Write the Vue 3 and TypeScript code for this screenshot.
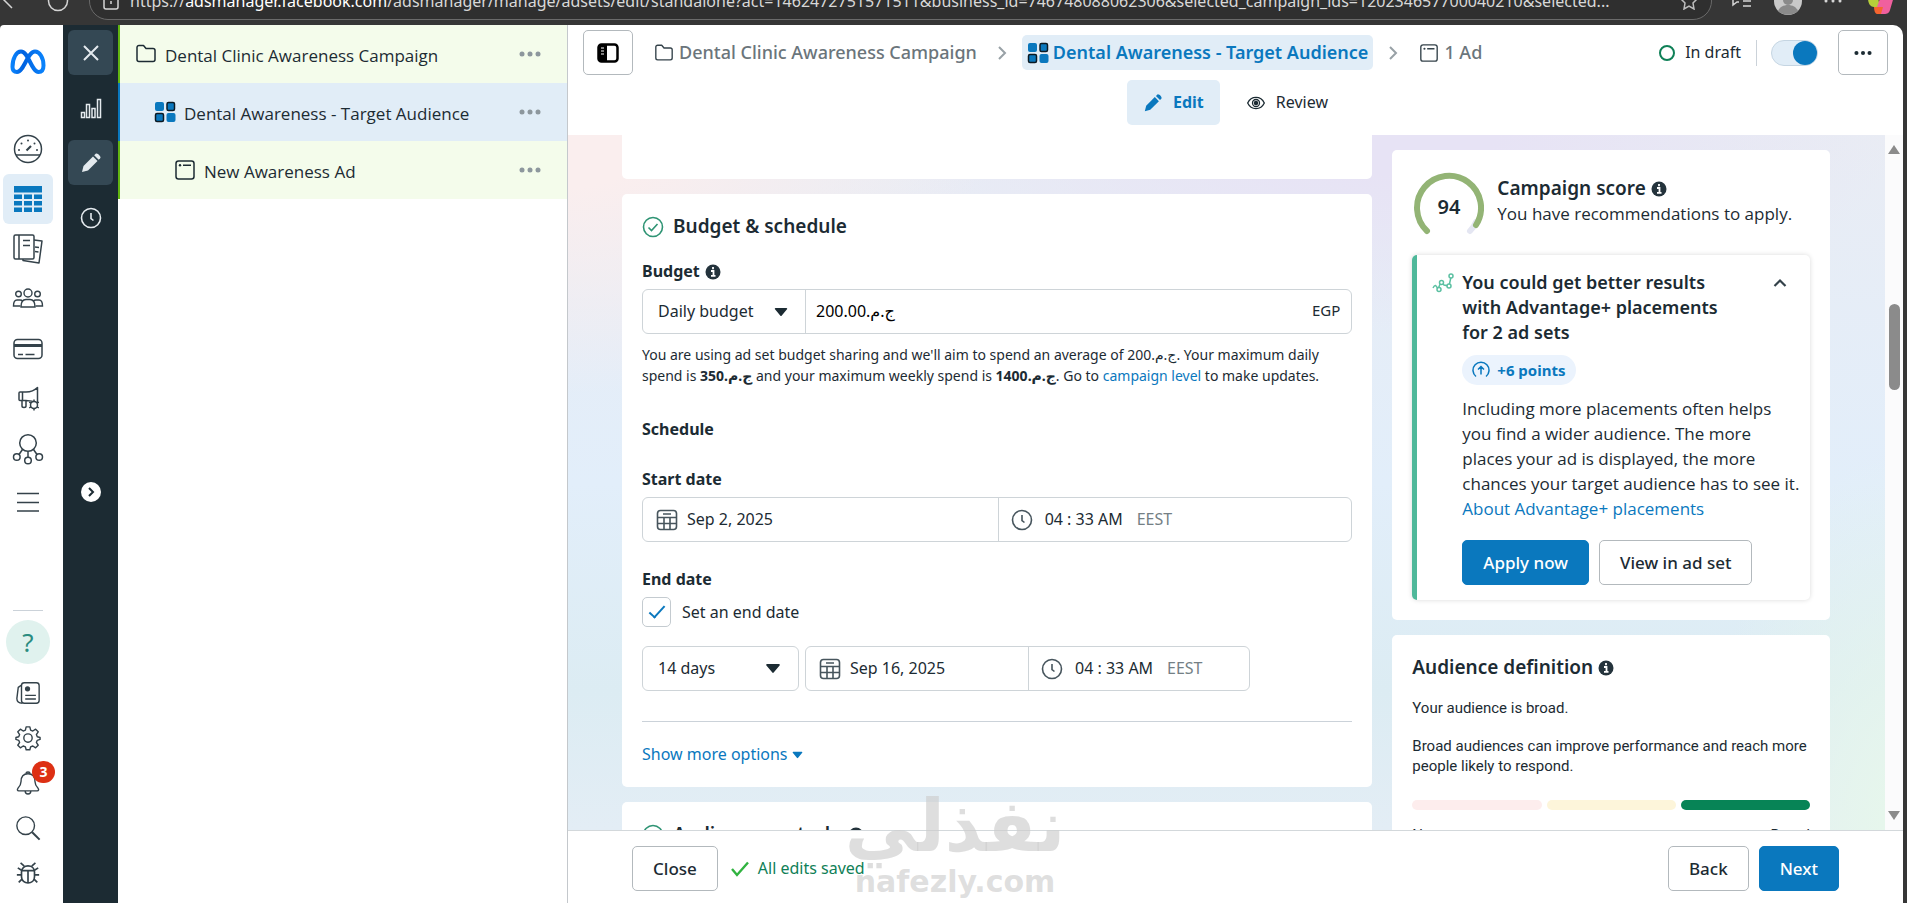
<script setup lang="ts">
import { ref } from 'vue'

interface TreeRow {
  icon: string
  label: string
  depth: number
  active: boolean
}

const treeRows: TreeRow[] = [
  { icon: 'folder', label: 'Dental Clinic Awareness Campaign', depth: 0, active: false },
  { icon: 'adset', label: 'Dental Awareness - Target Audience', depth: 1, active: true },
  { icon: 'ad', label: 'New Awareness Ad', depth: 2, active: false },
]

const mainNav = [
  { icon: 'gauge', label: 'Account overview' },
  { icon: 'table', label: 'Campaigns' },
  { icon: 'pages', label: 'Ads reporting' },
  { icon: 'people', label: 'Audiences' },
  { icon: 'card', label: 'Billing' },
  { icon: 'megaphone', label: 'Advertising settings' },
  { icon: 'nodes', label: 'Events manager' },
  { icon: 'menu', label: 'All tools' },
]

const utilityNav = [
  { icon: 'news', label: 'News', badge: 0 },
  { icon: 'gear', label: 'Settings', badge: 0 },
  { icon: 'bell', label: 'Notifications', badge: 3 },
  { icon: 'search', label: 'Search', badge: 0 },
  { icon: 'bug', label: 'Report a problem', badge: 0 },
]

const budgetType = ref('Daily budget')
const budgetAmount = ref('200.00\u2067ج.م.\u2069')
const startDate = ref('Sep 2, 2025')
const startTime = ref('04 : 33 AM')
const hasEndDate = ref(true)
const duration = ref('14 days')
const endDate = ref('Sep 16, 2025')
const endTime = ref('04 : 33 AM')
const adsetOn = ref(true)
</script>

<template>
  <svg class="sprite" width="0" height="0" aria-hidden="true">
    <defs>
      <linearGradient id="meta-grad" x1="0" y1="0" x2="1" y2="0">
        <stop offset="0" stop-color="#0a82fb" />
        <stop offset=".35" stop-color="#0062e0" />
        <stop offset="1" stop-color="#0a82fb" />
      </linearGradient>
    </defs>
    <symbol id="folder" viewBox="0 0 22 22">
      <path d="M2 4.500a2 2 0 0 1 2-2h4.500l2.500 3H18a2 2 0 0 1 2 2v9a2 2 0 0 1-2 2H4a2 2 0 0 1-2-2z" fill="none" stroke="currentColor" stroke-width="1.500" stroke-linejoin="round" />
    </symbol>
    <symbol id="adset" viewBox="0 0 22 22">
      <rect x="1" y="1" width="9" height="9" rx="2" fill="#0a78be" />
      <rect x="13" y="1.500" width="7.500" height="8" rx="1.500" fill="#0a78be" stroke="#0b1a24" stroke-width="1.500" />
      <rect x="1.500" y="12.500" width="8" height="8" rx="1.500" fill="#0a78be" stroke="#0b1a24" stroke-width="1.500" />
      <rect x="12.500" y="12" width="9" height="9" rx="2" fill="#0a78be" />
    </symbol>
    <symbol id="ad" viewBox="0 0 22 22">
      <rect x="2" y="2" width="18" height="18" rx="2.500" fill="none" stroke="currentColor" stroke-width="1.500" />
      <circle cx="6" cy="6.300" r="1.200" fill="currentColor" />
      <path d="M9 6.300h8" stroke="currentColor" stroke-width="1.500" />
    </symbol>
    <symbol id="gauge" viewBox="0 0 32 32">
      <g fill="none" stroke="currentColor" stroke-width="1.500">
        <circle cx="16" cy="16" r="13.500" />
        <path d="M4 22h24" />
        <path d="M14.500 17.500l4.500-4.500" stroke-width="2.200" />
      </g>
      <g fill="currentColor"><circle cx="7" cy="17" r="1" /><circle cx="9.500" cy="10.500" r="1" /><circle cx="16" cy="7.500" r="1" /><circle cx="22.500" cy="10.500" r="1" /><circle cx="25" cy="17" r="1" /></g>
    </symbol>
    <symbol id="table" viewBox="0 0 32 32">
      <g fill="#0a78be">
        <rect x="2" y="3" width="28" height="6.500" />
        <rect x="2" y="11.500" width="8" height="4.500" /><rect x="12" y="11.500" width="8" height="4.500" /><rect x="22" y="11.500" width="8" height="4.500" />
        <rect x="2" y="18" width="8" height="4.500" /><rect x="12" y="18" width="8" height="4.500" /><rect x="22" y="18" width="8" height="4.500" />
        <rect x="2" y="24.500" width="8" height="4.500" /><rect x="12" y="24.500" width="8" height="4.500" /><rect x="22" y="24.500" width="8" height="4.500" />
      </g>
    </symbol>
    <symbol id="pages" viewBox="0 0 32 32">
      <g fill="none" stroke="currentColor" stroke-width="1.500" stroke-linejoin="round">
        <rect x="2" y="2" width="20" height="24" rx="1.500" />
        <path d="M7 2v24M11 7.500h7M11 12.500h7" />
        <path d="M22 7l8 1-3 22-16-2.500V26M23 14l4 .600M23 18.500l3.500.500" />
      </g>
    </symbol>
    <symbol id="people" viewBox="0 0 32 32">
      <g fill="none" stroke="currentColor" stroke-width="1.400">
        <circle cx="16" cy="10" r="4" /><circle cx="6.500" cy="11" r="2.800" /><circle cx="25.500" cy="11" r="2.800" />
        <path d="M9 24c0-5 2-7.500 5-7.500h4c3 0 5 2.500 5 7.500z" />
        <path d="M8.500 23H1.500c0-4 1-6 3.500-6h3c1 0 2 .300 2.500 1M23.500 23h7c0-4-1-6-3.500-6h-3c-1 0-2 .300-2.500 1" />
      </g>
    </symbol>
    <symbol id="card" viewBox="0 0 32 32">
      <rect x="2" y="6.500" width="28" height="19" rx="3.500" fill="none" stroke="currentColor" stroke-width="1.500" />
      <path d="M2 12.500h28" stroke="currentColor" stroke-width="3" />
      <path d="M6 21.500h5M13.500 21.500h9" stroke="currentColor" stroke-width="1.300" />
    </symbol>
    <symbol id="megaphone" viewBox="0 0 32 32">
      <g fill="none" stroke="currentColor" stroke-width="1.500" stroke-linejoin="round">
        <path d="M7 10v6.500a1 1 0 0 0 1 1h6c5 0 8 1 11.500 2.500V4.500C22 8 19 9 14 9H8a1 1 0 0 0-1 1zM10.500 9v8.500M10 17.500v5.500c0 2 4 2 4 0v-5" />
      </g>
      <g stroke="currentColor" stroke-width="1.500"><circle cx="22" cy="22" r="3.500" fill="#fff" /><path d="M22 16.500v2M22 25.500v2M17.200 19.200l1.800 1M25 23.800l1.800 1M17.200 24.800l1.800-1M25 20.200l1.800-1" /></g>
    </symbol>
    <symbol id="nodes" viewBox="0 0 32 32">
      <g fill="none" stroke="currentColor" stroke-width="1.500">
        <circle cx="16" cy="10" r="8.300" /><circle cx="4.800" cy="24" r="3.300" /><circle cx="27.200" cy="24" r="3.300" /><circle cx="16" cy="27.500" r="3.300" />
        <path d="M16 18.500v5.500M10.500 16.500l-3.500 5M21.500 16.500l3.500 5" />
      </g>
    </symbol>
    <symbol id="menu" viewBox="0 0 32 32">
      <path d="M5 10.500h22M5 19.500h22M5 28h22" stroke="currentColor" stroke-width="1.500" />
    </symbol>
    <symbol id="news" viewBox="0 0 28 28">
      <g fill="none" stroke="currentColor" stroke-width="1.500" stroke-linejoin="round">
        <rect x="7" y="3" width="19" height="22" rx="3" />
        <path d="M7 5.500L3.500 8 2 20c0 3 2 5 6 5" /><path d="M11 16.500h11.500M11 20.500h11.500" />
      </g>
      <circle cx="13.500" cy="9.500" r="2.800" fill="currentColor" />
    </symbol>
    <symbol id="gear" viewBox="0 0 28 28">
      <g fill="none" stroke="currentColor" stroke-width="1.500" stroke-linejoin="round">
        <circle cx="14" cy="14" r="4.500" />
        <path d="M12 2h4l.800 3.500 2.400 1 3-2 2.800 2.800-2 3 1 2.400L27 13.500v2l-3 1-1 2.300 2 3-2.800 2.800-3-2-2.400 1-.800 3h-4l-.800-3-2.400-1-3 2L3 21.800l2-3-1-2.300-3-1v-2l3-.800 1-2.400-2-3 2.800-2.800 3 2 2.400-1z" />
      </g>
    </symbol>
    <symbol id="bell" viewBox="0 0 28 28">
      <g fill="none" stroke="currentColor" stroke-width="1.500" stroke-linejoin="round">
        <path d="M14 4c5 0 7.500 3.500 7.500 8.500 0 4 1.500 5.500 3.500 7.500.800 1 .500 2.500-1 2.500H4c-1.500 0-1.800-1.500-1-2.500 2-2 3.500-3.500 3.500-7.500C6.500 7.500 9 4 14 4z" />
        <path d="M11 22.500c0 4.500 6 4.500 6 0M12 4c0-2.500 4-2.500 4 0" />
      </g>
    </symbol>
    <symbol id="search" viewBox="0 0 28 28">
      <circle cx="11.500" cy="11.500" r="9.500" fill="none" stroke="currentColor" stroke-width="1.500" />
      <path d="M18.500 18.500l8 8" stroke="currentColor" stroke-width="2.200" />
    </symbol>
    <symbol id="bug" viewBox="0 0 28 28">
      <g fill="none" stroke="currentColor" stroke-width="1.800">
        <path d="M7 13c0-9 14-9 14 0v5c0 9-14 9-14 0zM7 11.500h14M14 11.500V25" />
        <path d="M10 6.500L6 3M18 6.500L22 3M7 11L3 8.500M21 11l4-2.500M7 16H2M21 16h5M7.500 20.500L4 24M20.500 20.500L24 24" />
      </g>
    </symbol>
    <symbol id="pencil" viewBox="0 0 22 22">
      <path d="M2 20l1.500-6L13 4.500l4.500 4.500L8 18.500z" fill="currentColor" />
      <path d="M14.200 3.300l1.500-1.500c1.500-1.500 6 3 4.500 4.500l-1.500 1.500z" fill="currentColor" />
    </symbol>
    <symbol id="clock" viewBox="0 0 22 22">
      <g fill="none" stroke="currentColor" stroke-width="1.600"><circle cx="11" cy="11" r="9.500" /><path d="M11 6v5.500l2.500 2" /></g>
    </symbol>
    <symbol id="calendar" viewBox="0 0 22 22">
      <g fill="none" stroke="currentColor" stroke-width="1.600">
        <rect x="1.500" y="1.500" width="19" height="19" rx="3" /><path d="M1.500 8.500h19M1.500 14.500h19M8 8.500v12M14 8.500v12M7 5h8" />
      </g>
    </symbol>
    <symbol id="chevron" viewBox="0 0 12 16">
      <path d="M3 2l6 6-6 6" fill="none" stroke="currentColor" stroke-width="2" />
    </symbol>
    <symbol id="check-ring" viewBox="0 0 22 22">
      <g fill="none" stroke="#2f9474" stroke-width="1.600"><circle cx="11" cy="11" r="9.500" /><path d="M6.500 11.500l3 3 6-6.500" /></g>
    </symbol>
    <symbol id="info" viewBox="0 0 16 16">
      <circle cx="8" cy="8" r="7.500" fill="#24333c" />
      <path d="M8 3v2.200M6 7h2.500v4.500M6 11.800h4.500" stroke="#fff" stroke-width="1.800" fill="none" />
    </symbol>
    <symbol id="caret" viewBox="0 0 14 10">
      <path d="M1.500 1h11a.7.700 0 0 1 .500 1.200L7.800 8.500a1 1 0 0 1-1.600 0L1 2.200A.7.700 0 0 1 1.500 1z" fill="currentColor" />
    </symbol>
    <symbol id="dots" viewBox="0 0 22 6">
      <g fill="currentColor"><circle cx="3" cy="3" r="2.500" /><circle cx="11" cy="3" r="2.500" /><circle cx="19" cy="3" r="2.500" /></g>
    </symbol>
  </svg>

  <div class="window">
    <header class="browser">
      <svg class="nav-icons" width="89" height="40" viewBox="0 0 89 40" fill="none" stroke="#d5d5d5" stroke-width="1.500">
        <path d="M12 27L2 17" /><circle cx="58" cy="20" r="9.500" />
      </svg>
      <div class="omnibox">
        <svg width="16" height="18" viewBox="0 0 16 18" fill="none" stroke="#d5d5d5" stroke-width="1.500">
          <rect x="1" y="5" width="14" height="12" rx="2" /><path d="M4 5V1h8v4M8 9v3" />
        </svg>
        <span class="url">https://<b>adsmanager.facebook.com</b>/adsmanager/manage/adsets/edit/standalone?act=1462472751571511&amp;business_id=746748088062306&amp;selected_campaign_ids=120234657700040210&amp;selected...</span>
        <svg width="18" height="18" viewBox="0 0 18 18" fill="none" stroke="#bdbdbd" stroke-width="1.500">
          <path d="M9 1l2.500 5.300 5.500.700-4 4 1 6L9 14l-5 3 1-6-4-4 5.500-.700z" />
        </svg>
      </div>
      <svg class="tools" width="195" height="40" viewBox="0 0 195 40" fill="none">
        <path d="M21 17v7l4-3h2M24 15h15M31 20h8M31 25h8" stroke="#d5d5d5" stroke-width="1.500" />
        <circle cx="76" cy="20" r="14" fill="#c9c9c9" /><circle cx="76" cy="19" r="5" fill="#8a8a8a" /><path d="M66 30c3-8 17-8 20 0-5 5-15 5-20 0z" fill="#8a8a8a" />
        <g fill="#d5d5d5"><circle cx="114" cy="20" r="1.500" /><circle cx="121" cy="20" r="1.500" /><circle cx="128" cy="20" r="1.500" /></g>
        <g>
          <path d="M156 17l9-5 3 14h-6c-4 0-6-4-6-9z" fill="#b6cf3a" /><path d="M165 26l5-14h13l-5 17c-1 4-4 4-7 4h-6c3-1 4-4 5-7z" fill="#f0609e" /><path d="M162 26h9l-2 7h-4c-2 0-3-4-3-7z" fill="#f5652f" />
        </g>
      </svg>
    </header>

    <div class="app">
      <nav class="rail" aria-label="Tools">
        <svg class="meta" width="36" height="26" viewBox="0 0 36 26" aria-label="Meta">
          <path d="M2.500 18C2.500 9 6.500 2.500 11 2.500c7.500 0 10.500 20.500 17.500 20.500 3.500 0 5-2.500 5-6.500 0-8-4-14-8.500-14C17.500 2.500 14 23 7 23c-3 0-4.500-2-4.500-5z" fill="none" stroke="url(#meta-grad)" stroke-width="4" />
        </svg>
        <div class="rail-main">
          <button v-for="item in mainNav" :key="item.icon" type="button" class="rail-btn" :class="{ current: item.icon === 'table' }" :aria-label="item.label">
            <svg width="32" height="32"><use :href="'#' + item.icon" /></svg>
          </button>
        </div>
        <div class="rail-foot">
          <button type="button" class="help" aria-label="Help">?</button>
          <button v-for="item in utilityNav" :key="item.icon" type="button" class="util-btn" :aria-label="item.label">
            <svg width="26" height="26"><use :href="'#' + item.icon" /></svg>
            <span v-if="item.badge" class="badge">{{ item.badge }}</span>
          </button>
        </div>
      </nav>

      <nav class="dark-rail" aria-label="Editor views">
        <button type="button" class="dark-btn lit" aria-label="Close editor">
          <svg width="20" height="20" viewBox="0 0 20 20"><path d="M3 3l14 14M17 3L3 17" stroke="currentColor" stroke-width="2" /></svg>
        </button>
        <button type="button" class="dark-btn" aria-label="Charts">
          <svg width="22" height="22" viewBox="0 0 22 22" fill="none" stroke="currentColor" stroke-width="1.500"><rect x="1.500" y="15.500" width="3" height="5" /><rect x="6.500" y="7.500" width="3" height="13" /><rect x="12" y="11.500" width="3" height="9" /><rect x="17.500" y="2.500" width="3" height="18" /></svg>
        </button>
        <button type="button" class="dark-btn lit" aria-label="Edit">
          <svg width="22" height="22"><use href="#pencil" /></svg>
        </button>
        <button type="button" class="dark-btn" aria-label="History">
          <svg width="22" height="22"><use href="#clock" /></svg>
        </button>
        <button type="button" class="expand" aria-label="Expand panel">
          <svg width="12" height="12" viewBox="0 0 12 12"><path d="M4 2l4 4-4 4" fill="none" stroke="#1c2b33" stroke-width="2" /></svg>
        </button>
      </nav>

      <aside class="tree">
        <div v-for="row in treeRows" :key="row.label" class="tree-row" :class="['depth-' + row.depth, { active: row.active }]">
          <svg width="22" height="22"><use :href="'#' + row.icon" /></svg>
          <span class="tree-label">{{ row.label }}</span>
          <button type="button" class="more" aria-label="More actions"><svg width="22" height="6"><use href="#dots" /></svg></button>
        </div>
      </aside>

      <section class="editor">
        <div class="head">
          <div class="crumb-row">
            <button type="button" class="box-btn" aria-label="Toggle side panel">
              <svg width="22" height="20" viewBox="0 0 22 20"><rect x="1.500" y="1.500" width="19" height="17" rx="3" fill="#fff" stroke="#000" stroke-width="2.500" /><path d="M2 2h8v16H2z" /><path d="M4 5h3M4 8h3M4 11h3" stroke="#fff" stroke-width="1.200" /></svg>
            </button>
            <a href="#" class="crumb"><svg width="22" height="20"><use href="#folder" /></svg>Dental Clinic Awareness Campaign</a>
            <svg class="sep" width="12" height="16"><use href="#chevron" /></svg>
            <a href="#" class="crumb here"><svg width="22" height="22"><use href="#adset" /></svg>Dental Awareness - Target Audience</a>
            <svg class="sep" width="12" height="16"><use href="#chevron" /></svg>
            <a href="#" class="crumb"><svg width="22" height="20"><use href="#ad" /></svg>1 Ad</a>
            <div class="status">
              <span class="ring"></span><span>In draft</span>
              <label class="switch"><input v-model="adsetOn" type="checkbox" role="switch" aria-label="Ad set on" /></label>
              <button type="button" class="box-btn" aria-label="More options"><svg width="18" height="6"><use href="#dots" /></svg></button>
            </div>
          </div>
          <div class="tabs">
            <button type="button" class="tab on"><svg width="20" height="20"><use href="#pencil" /></svg>Edit</button>
            <button type="button" class="tab">
              <svg width="20" height="14" viewBox="0 0 22 16" fill="none" stroke="currentColor" stroke-width="1.500"><path d="M1.500 8c4-8.500 15-8.500 19 0-4 8.500-15 8.500-19 0z" /><circle cx="11" cy="8" r="4" /><circle cx="11" cy="8" r="1.800" fill="currentColor" /></svg>Review
            </button>
          </div>
        </div>

        <div class="scroll-area">
          <div class="columns">
            <div class="col">
              <div class="card stub"></div>
              <div class="card form">
                <h2><svg width="22" height="22"><use href="#check-ring" /></svg>Budget &amp; schedule</h2>
                <div class="field">
                  <label for="amount" class="label">Budget <svg width="16" height="16"><use href="#info" /></svg></label>
                  <div class="combo">
                    <span class="select budget-type">
                      <select v-model="budgetType" aria-label="Budget type"><option>Daily budget</option><option>Lifetime budget</option></select>
                      <svg width="14" height="10"><use href="#caret" /></svg>
                    </span>
                    <input id="amount" v-model="budgetAmount" class="amount" type="text" />
                    <span class="currency">EGP</span>
                  </div>
                  <p class="hint">You are using ad set budget sharing and we'll aim to spend an average of 200.<bdi dir="rtl">ج.م</bdi>. Your maximum daily spend is <b>350.<bdi dir="rtl">ج.م</bdi></b> and your maximum weekly spend is <b>1400.<bdi dir="rtl">ج.م</bdi></b>. Go to <a href="#">campaign level</a> to make updates.</p>
                </div>
                <h3 class="label schedule">Schedule</h3>
                <div class="field start">
                  <label for="start" class="label">Start date</label>
                  <div class="combo">
                    <span class="cell"><svg width="22" height="22"><use href="#calendar" /></svg><input id="start" v-model="startDate" type="text" /></span>
                    <span class="cell"><svg width="22" height="22"><use href="#clock" /></svg><input v-model="startTime" class="time" type="text" aria-label="Start time" /><span class="zone">EEST</span></span>
                  </div>
                </div>
                <h3 class="label end-label">End date</h3>
                <label class="tick"><input v-model="hasEndDate" type="checkbox" /><span>Set an end date</span></label>
                <div class="end-row">
                  <span class="select duration">
                    <select v-model="duration" aria-label="Duration"><option>14 days</option><option>30 days</option></select>
                    <svg width="16" height="11"><use href="#caret" /></svg>
                  </span>
                  <div class="combo">
                    <span class="cell"><svg width="22" height="22"><use href="#calendar" /></svg><input v-model="endDate" type="text" aria-label="End date" /></span>
                    <span class="cell"><svg width="22" height="22"><use href="#clock" /></svg><input v-model="endTime" class="time" type="text" aria-label="End time" /><span class="zone">EEST</span></span>
                  </div>
                </div>
                <button type="button" class="show-more">Show more options <svg width="11" height="8"><use href="#caret" /></svg></button>
              </div>
              <div class="card form next-card">
                <h2><svg width="22" height="22"><use href="#check-ring" /></svg>Audience controls <svg width="16" height="16"><use href="#info" /></svg></h2>
              </div>
            </div>

            <div class="col side">
              <div class="card score">
                <div class="score-head">
                  <svg class="dial" width="70" height="64" viewBox="0 0 70 64" fill="none" stroke-width="6" stroke-linecap="round">
                    <path d="M56 59c3-3 5-6 6-9" stroke="#e4e6f2" />
                    <path d="M13 59A32 32 0 1 1 62 53" stroke="#93b475" />
                    <text x="35" y="42">94</text>
                  </svg>
                  <div>
                    <h2>Campaign score <svg width="16" height="16"><use href="#info" /></svg></h2>
                    <p>You have recommendations to apply.</p>
                  </div>
                </div>
                <div class="tip">
                  <svg class="spark" width="22" height="20" viewBox="0 0 22 20" fill="none" stroke="#5cc0a2" stroke-width="1.500"><path d="M1 15c2-4 3-3 5 1l3-7 3 3 5 1 2-9" /><circle cx="7" cy="16.500" r="2" fill="#fff" /><circle cx="9.500" cy="9.500" r="2" fill="#fff" /><circle cx="17" cy="13" r="2" fill="#fff" /><circle cx="19" cy="3" r="2" fill="#fff" /></svg>
                  <div class="tip-body">
                    <h2>You could get better results with Advantage+ placements for 2 ad sets</h2>
                    <span class="points">
                      <svg width="18" height="18" viewBox="0 0 18 18" fill="none" stroke="currentColor" stroke-width="1.500"><path d="M4 15.500a8 8 0 1 1 10 0M9 13.500V6M6 8.500L9 5.500l3 3" /></svg>+6 points
                    </span>
                    <p>Including more placements often helps you find a wider audience. The more places your ad is displayed, the more chances your target audience has to see it. <a href="#">About Advantage+ placements</a></p>
                    <div class="tip-actions">
                      <button type="button" class="btn primary">Apply now</button>
                      <button type="button" class="btn">View in ad set</button>
                    </div>
                  </div>
                  <button type="button" class="fold" aria-label="Collapse"><svg width="14" height="10" viewBox="0 0 14 10"><path d="M1.500 8L7 2.500 12.500 8" fill="none" stroke="currentColor" stroke-width="2.200" /></svg></button>
                </div>
              </div>
              <div class="card audience">
                <h2>Audience definition <svg width="16" height="16"><use href="#info" /></svg></h2>
                <p>Your audience is broad.</p>
                <p class="second">Broad audiences can improve performance and reach more people likely to respond.</p>
                <div class="meter"><span class="low"></span><span class="mid"></span><span class="high"></span></div>
                <div class="ends"><span>Narrow</span><span>Broad</span></div>
              </div>
            </div>
          </div>
          <div class="scrollbar" aria-hidden="true">
            <svg width="12" height="9" viewBox="0 0 12 9"><path d="M6 0l6 9H0z" fill="#8b8b8b" /></svg>
            <span class="thumb"></span>
            <svg width="12" height="9" viewBox="0 0 12 9"><path d="M6 9l6-9H0z" fill="#8b8b8b" /></svg>
          </div>
        </div>

        <footer class="foot">
          <button type="button" class="btn close">Close</button>
          <span class="saved"><svg width="20" height="16" viewBox="0 0 20 16"><path d="M2 8l5 6L18 1.500" fill="none" stroke="#31b340" stroke-width="2.400" /></svg>All edits saved</span>
          <button type="button" class="btn back">Back</button>
          <button type="button" class="btn primary next">Next</button>
        </footer>
      </section>
    </div>

    <div class="watermark" aria-hidden="true"><span class="wm-ar" dir="rtl">نفذلي</span><span class="wm-en">nafezly.com</span></div>
  </div>
</template>

<style>
body {
  margin: 0;
  overflow: hidden;
}
</style>

<style scoped>
* {
  box-sizing: border-box;
}
.sprite {
  position: absolute;
}
.window {
  position: relative;
  height: 100vh;
  display: flex;
  flex-direction: column;
  background: #363636;
  color: #1c2b33;
  font: 16px/25px 'Noto Sans', 'DejaVu Sans', sans-serif;
}
svg {
  flex: none;
  display: block;
}
h2,
h3,
p {
  margin: 0;
}
h2 {
  display: flex;
  align-items: center;
  font-size: 19px;
  font-weight: 600;
}
a {
  color: #0a78be;
  text-decoration: none;
}
button,
input,
select {
  font: inherit;
  color: inherit;
}
button {
  border: 0;
  padding: 0;
  background: none;
  display: flex;
  align-items: center;
  justify-content: center;
}
.browser {
  height: 25px;
  flex: none;
  display: flex;
  align-items: flex-end;
  padding-bottom: 5px;
  overflow: hidden;
  color: #d8d8d8;
}
.nav-icons,
.tools {
  margin-bottom: -1px;
}
.omnibox {
  flex: 1;
  min-width: 0;
  height: 38px;
  display: flex;
  align-items: center;
  gap: 11px;
  padding: 0 13px;
  border: 1px solid #6a6a6a;
  border-radius: 19px;
  background: #2f2f2f;
}
.url {
  flex: 1;
  white-space: nowrap;
  overflow: hidden;
  font-size: 16px;
}
.url b {
  font-weight: 400;
  color: #fff;
}
.app {
  flex: 1;
  min-height: 0;
  display: flex;
  margin-right: 4px;
  border-radius: 4px 10px 0 0;
  overflow: hidden;
  background: #fff;
}
.rail {
  width: 63px;
  flex: none;
  display: flex;
  flex-direction: column;
  padding: 24px 7px 8px 3px;
  color: #34424a;
}
.meta {
  margin: 0 auto 49px 7px;
}
.rail-btn {
  width: 50px;
  height: 50px;
  border-radius: 6px;
}
.rail-btn.current {
  background: #e1edf7;
}
.rail-foot {
  margin-top: auto;
  width: 50px;
  display: flex;
  flex-direction: column;
  align-items: center;
}
.rail-foot::before {
  content: '';
  width: 30px;
  height: 1px;
  margin-bottom: 9px;
  background: #cbd2d9;
}
.help {
  width: 44px;
  height: 44px;
  margin-bottom: 6px;
  border-radius: 50%;
  background: #e0f2ee;
  color: #2a8c80;
  font-size: 26px;
}
.util-btn {
  position: relative;
  width: 50px;
  height: 45px;
}
.badge {
  position: absolute;
  left: 29px;
  top: 1px;
  width: 23px;
  height: 22px;
  border-radius: 11px;
  background: #dd3014;
  color: #fff;
  font-size: 14px;
  font-weight: 700;
  line-height: 22px;
}
.dark-rail {
  width: 55px;
  flex: none;
  display: flex;
  flex-direction: column;
  align-items: center;
  gap: 10px;
  padding-top: 5px;
  background: #1c2b33;
  color: #e4eaee;
}
.dark-btn {
  width: 45px;
  height: 45px;
  border-radius: 6px;
}
.dark-btn.lit {
  background: #344854;
}
.expand {
  width: 20px;
  height: 20px;
  margin-top: 232px;
  border-radius: 50%;
  background: #fff;
}
.tree {
  width: 450px;
  flex: none;
  border-right: 1px solid #c4c8cc;
}
.tree-row {
  height: 58px;
  display: flex;
  align-items: center;
  gap: 8px;
  padding: 0 26px 0 15px;
  border-left: 2px solid #62b512;
  background: #f4fceb;
}
.tree-row.active {
  border-color: #0a78be;
  background: #e1edf7;
}
.tree-row.depth-1 {
  padding-left: 34px;
}
.tree-row.depth-2 {
  padding-left: 54px;
}
.tree-label {
  flex: 1;
  padding-top: 3px;
  font-family: 'Open Sans', sans-serif;
  font-size: 17px;
}
.more {
  color: #8d979d;
}
.editor {
  flex: 1;
  min-width: 0;
  display: flex;
  flex-direction: column;
}
.head {
  height: 110px;
  flex: none;
  padding: 5px 15px 0;
}
.crumb-row {
  display: flex;
  align-items: center;
}
.box-btn {
  width: 50px;
  height: 45px;
  border: 1px solid #b3b9bd;
  border-radius: 5px;
}
.crumb {
  display: flex;
  align-items: center;
  gap: 4px;
  height: 35px;
  padding: 0 5px;
  border-radius: 5px;
  color: #6b757b;
  font-size: 18px;
  font-weight: 500;
  white-space: nowrap;
}
.crumb svg {
  color: #34424a;
}
.crumb.here {
  color: #0a78be;
  background: #e1edf7;
  font-weight: 600;
}
.box-btn + .crumb {
  margin-left: 15px;
}
.sep {
  margin: 0 14px;
  color: #98a1a6;
}
.status {
  margin-left: auto;
  display: flex;
  align-items: center;
  gap: 10px;
}
.ring {
  width: 16px;
  height: 16px;
  border: 2px solid #0f8057;
  border-radius: 50%;
}
.switch {
  margin: 0 10px 0 5px;
  padding-left: 14px;
  border-left: 1px solid #cbd2d9;
  display: flex;
}
.switch input {
  appearance: none;
  width: 47px;
  height: 26px;
  margin: 0;
  border: 1px solid #c5d5e2;
  border-radius: 13px;
  background: #e1edf7;
  display: flex;
}
.switch input::before {
  content: '';
  width: 24px;
  height: 24px;
  border-radius: 50%;
  background: #0a78be;
}
.switch input:checked {
  justify-content: flex-end;
}
.tabs {
  display: flex;
  justify-content: center;
  gap: 10px;
  margin-top: 5px;
}
.tab {
  gap: 10px;
  height: 45px;
  padding: 0 16px;
  border-radius: 5px;
}
.tab.on {
  color: #0a78be;
  background: #e1edf7;
  font-weight: 700;
}
.scroll-area {
  flex: 1;
  min-height: 0;
  display: flex;
  overflow: hidden;
  background:
    radial-gradient(ellipse 420px 260px at 0 0, #faeeee 20%, transparent),
    radial-gradient(ellipse 500px 200px at 62% 0, #e7e3f5 20%, transparent),
    radial-gradient(ellipse 200px 380px at 100% 100%, #e6f6ec 10%, transparent),
    linear-gradient(#e9ecf4, #e2eefa 50%, #dcecf3 80%, #e3edf5);
}
.columns {
  flex: 1;
  min-width: 0;
  display: grid;
  grid-template-columns: 12fr 7fr;
  align-items: start;
  gap: 20px;
  padding: 0 55px 0 54px;
}
.col {
  display: flex;
  flex-direction: column;
  gap: 15px;
  min-width: 0;
}
.side {
  padding-top: 15px;
}
.card {
  border-radius: 5px;
  background: #fff;
}
.stub {
  height: 44px;
  border-radius: 0 0 5px 5px;
}
.form {
  padding: 20px;
}
.form h2 {
  gap: 9px;
}
.label {
  display: flex;
  align-items: center;
  gap: 5px;
  font-size: 16px;
  font-weight: 700;
}
.field {
  margin-top: 20px;
}
.combo {
  display: flex;
  min-width: 0;
  height: 45px;
  border: 1px solid #ced4d8;
  border-radius: 6px;
}
.field .combo {
  margin-top: 5px;
}
.select {
  position: relative;
  display: flex;
  align-items: center;
}
.select select {
  appearance: none;
  width: 100%;
  height: 100%;
  padding: 0 40px 0 15px;
  border: 0;
  background: none;
}
.select svg {
  position: absolute;
  right: 17px;
  pointer-events: none;
}
.budget-type {
  width: 163px;
  border-right: 1px solid #ced4d8;
}
input[type='text'] {
  min-width: 0;
  padding: 0;
  border: 0;
  background: none;
  outline: none;
}
.combo .amount {
  flex: 1;
  padding: 0 10px;
  color: #000;
}
.currency {
  padding: 8px 11px;
  font-size: 15px;
}
.hint {
  margin-top: 10px;
  font-size: 14px;
  line-height: 21px;
}
.schedule {
  margin-top: 31px;
}
.start {
  margin-top: 25px;
}
.cell {
  flex: 1;
  min-width: 0;
  display: flex;
  align-items: center;
  gap: 9px;
  padding: 0 13px;
}
.cell + .cell {
  gap: 12px;
  padding: 0 12px;
  border-left: 1px solid #ced4d8;
}
.cell svg {
  color: #47555d;
}
.cell input {
  flex: 1;
}
.cell .time {
  flex: none;
  width: 80px;
}
.zone {
  color: #747f85;
}
.end-label {
  margin-top: 25px;
}
.tick {
  display: flex;
  align-items: center;
  gap: 11px;
  height: 30px;
  margin-top: 5px;
}
.tick input {
  appearance: none;
  width: 29px;
  height: 30px;
  margin: 0;
  border: 1px solid #c4cbd0;
  border-radius: 5px;
  display: grid;
  place-items: center;
}
.tick input:checked::before {
  content: '';
  width: 6px;
  height: 14px;
  margin-bottom: 4px;
  border: solid #0a78be;
  border-width: 0 2px 2px 0;
  rotate: 42deg;
}
.end-row {
  display: flex;
  gap: 6px;
  width: 608px;
  max-width: 100%;
  margin-top: 19px;
}
.end-row .combo {
  flex: 1;
}
.duration {
  flex: none;
  width: 157px;
  height: 45px;
  border: 1px solid #ced4d8;
  border-radius: 6px;
}
.show-more {
  width: 100%;
  justify-content: flex-start;
  gap: 4px;
  margin-top: 30px;
  padding-top: 20px;
  border-top: 1px solid #cbd2d9;
  color: #0a78be;
}
.next-card {
  height: 90px;
}
.score {
  padding: 22px 20px 20px;
}
.score-head {
  display: flex;
  align-items: flex-start;
  gap: 13px;
  margin-bottom: 19px;
  padding-left: 2px;
}
.dial text {
  fill: #1c2b33;
  font-size: 20px;
  font-weight: 600;
  text-anchor: middle;
  stroke: none;
}
.score-head h2,
.audience h2 {
  gap: 5px;
}
.score-head > div {
  padding-top: 4px;
}
.score-head p,
.tip-body p {
  font-family: 'Open Sans', sans-serif;
  font-size: 17px;
}
.tip {
  display: flex;
  align-items: flex-start;
  padding: 15px 23px 15px 15px;
  border-left: 5px solid #4fb89a;
  border-radius: 5px;
  box-shadow: 0 0 5px rgba(0, 0, 0, 0.15);
}
.spark {
  margin: 3px 8px 0 0;
}
.tip-body {
  flex: 1;
  min-width: 0;
}
.tip-body h2 {
  padding-right: 30px;
  font-size: 18px;
}
.tip-body p {
  margin: 10px -28px 19px 0;
}
.tip-body p a {
  display: block;
}
.points {
  display: inline-flex;
  align-items: center;
  gap: 7px;
  height: 30px;
  margin-top: 10px;
  padding: 0 10px;
  border-radius: 15px;
  background: #ebf3fd;
  color: #0a78be;
  font-size: 15px;
  font-weight: 700;
}
.tip-actions {
  display: flex;
  gap: 10px;
}
.btn {
  height: 45px;
  padding: 0 20px;
  border: 1px solid #b3b9bd;
  border-radius: 5px;
  background: #fff;
  font-size: 17px;
  font-weight: 500;
  white-space: nowrap;
}
.btn.primary {
  border-color: #0a78be;
  background: #0a78be;
  color: #fff;
}
.fold {
  margin-top: 8px;
  color: #34424a;
}
.audience {
  padding: 20px;
}
.audience p {
  margin-top: 18px;
  font: 15px/20px Roboto, sans-serif;
}
.meter {
  display: flex;
  gap: 5px;
  margin-top: 24px;
}
.meter span {
  flex: 1;
  height: 10px;
  border-radius: 5px;
}
.low {
  background: #fdeded;
}
.mid {
  background: #fdf5da;
}
.high {
  background: #078456;
}
.ends {
  display: flex;
  justify-content: space-between;
  margin-top: 15px;
  font: 15px/20px Roboto, sans-serif;
}
.scrollbar {
  width: 18px;
  flex: none;
  display: flex;
  flex-direction: column;
  align-items: center;
  padding: 10px 0;
  background: #fbfbfc;
}
.thumb {
  width: 11px;
  height: 86px;
  margin: 150px 0 auto;
  border-radius: 6px;
  background: #8b8b8b;
}
.foot {
  height: 73px;
  flex: none;
  display: flex;
  align-items: flex-start;
  gap: 10px;
  padding: 15px 64px 0 64px;
  border-top: 1px solid #d3d8db;
}
.saved {
  display: flex;
  align-items: center;
  gap: 8px;
  height: 45px;
  margin: 0 auto 0 2px;
  color: #0f8057;
}
.watermark {
  position: absolute;
  left: 848px;
  bottom: 0;
  width: 214px;
  display: flex;
  flex-direction: column;
  align-items: center;
  color: rgba(205, 205, 205, 0.65);
  font-family: 'DejaVu Sans', sans-serif;
  font-weight: 700;
  white-space: nowrap;
  pointer-events: none;
}
.wm-ar {
  font-size: 72px;
  line-height: 70px;
}
.wm-en {
  font-size: 30px;
  line-height: 42px;
}
</style>
